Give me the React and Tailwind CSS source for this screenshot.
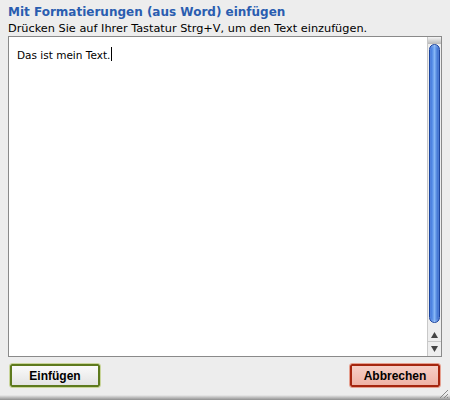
import React from 'react'

function Scrollbar() {
  return (
    <div className="flex w-[14px] flex-col border-l border-[#c8c8c8] bg-[#eeeeee]">
      {/* top cap */}
      <div className="h-[7px] bg-gradient-to-b from-[#f4f4f4] to-[#b9b9b9]" />
      {/* thumb */}
      <div className="mx-[1px] flex-1 rounded-full border border-[#1a44a0] bg-gradient-to-r from-[#2a63d6] via-[#86b6f6] to-[#2254c2] shadow-[inset_0_0_2px_rgba(255,255,255,0.6)]" />
      <div className="h-[6px]" />
      {/* arrows */}
      <div className="flex h-[13px] items-center justify-center border-b border-[#c8c8c8]">
        <svg width="7" height="6" viewBox="0 0 7 6"><path d="M3.5 0L7 6H0z" fill="#444" /></svg>
      </div>
      <div className="flex h-[14px] items-center justify-center">
        <svg width="7" height="6" viewBox="0 0 7 6"><path d="M0 0H7L3.5 6z" fill="#444" /></svg>
      </div>
    </div>
  )
}

export default function App() {
  return (
    <div className="flex h-[400px] w-[450px] flex-col bg-[#ededed] px-[8px] pt-[4px]" style={{ fontFamily: '"DejaVu Sans", Verdana, sans-serif' }}>
      <h1 className="text-[12px] leading-[17px] font-bold text-[#2a5db0]">Mit Formatierungen (aus Word) einfügen</h1>
      <p className="text-[11.3px] leading-[15px] text-black">Drücken Sie auf Ihrer Tastatur Strg+V, um den Text einzufügen.</p>

      <div className="flex h-[321px] w-[434px] border border-[#8a8a8a] bg-white">
        <div className="flex-1 pl-[8px] pt-[5px]">
          <span className="text-[10.5px] leading-[14px] text-black">Das ist mein Text.</span>
          <span className="ml-[1px] inline-block h-[14px] w-[1px] translate-y-[2px] bg-black" />
        </div>
        <Scrollbar />
      </div>

      <div className="mt-[7px] flex justify-between px-[2px]">
        <button className="h-[23px] w-[90px] rounded-[2px] border-2 border-[#5e7a1e] bg-gradient-to-b from-[#fafafa] to-[#e4e4e4] text-[12px] font-bold text-black outline outline-1 outline-[#c9d59a]" style={{ fontFamily: '"Liberation Sans", Arial, sans-serif' }}>
          Einfügen
        </button>
        <button className="h-[23px] w-[90px] rounded-[2px] border-2 border-[#a5260f] bg-gradient-to-b from-[#f6cfc6] to-[#efb3a6] text-[12px] font-bold text-black outline outline-1 outline-[#e6a090]" style={{ fontFamily: '"Liberation Sans", Arial, sans-serif' }}>
          Abbrechen
        </button>
      </div>

      <div className="relative mt-auto -mx-[8px] h-[5px] bg-gradient-to-b from-[#ededed] to-[#8f8f8f]">
        <svg className="absolute right-[1px] bottom-[1px]" width="12" height="12" viewBox="0 0 12 12">
          <path d="M11 3L3 11M11 7L7 11M11 10L10 11" stroke="#888" strokeWidth="1" />
        </svg>
      </div>
    </div>
  )
}
